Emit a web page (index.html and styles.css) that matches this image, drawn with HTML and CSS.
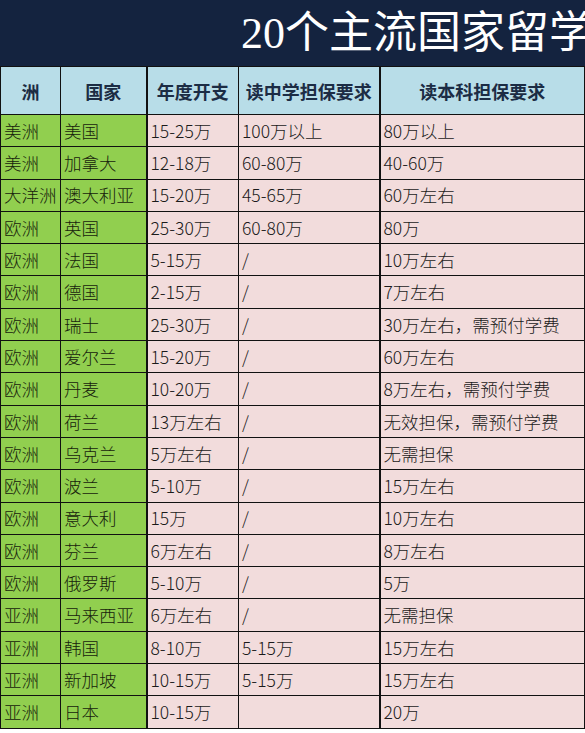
FILE: index.html
```html
<!DOCTYPE html>
<html lang="zh-CN">
<head>
<meta charset="utf-8">
<title>20个主流国家留学</title>
<link rel="stylesheet" href="styles.css">
</head>
<body>
<div class="sheet">
  <div class="title"><span class="title-text">20个主流国家留学</span></div>
  <table class="grid">
    <colgroup>
      <col class="c1"><col class="c2"><col class="c3"><col class="c4"><col class="c5">
    </colgroup>
    <thead>
      <tr class="head">
        <th>洲</th><th>国家</th><th class="thick">年度开支</th><th>读中学担保要求</th><th class="thick">读本科担保要求</th>
      </tr>
    </thead>
    <tbody>
      <tr><td class="g">美洲</td><td class="g">美国</td><td class="p thick">15-25万</td><td class="p">100万以上</td><td class="p thick">80万以上</td></tr>
      <tr><td class="g">美洲</td><td class="g">加拿大</td><td class="p thick">12-18万</td><td class="p">60-80万</td><td class="p thick">40-60万</td></tr>
      <tr><td class="g">大洋洲</td><td class="g">澳大利亚</td><td class="p thick">15-20万</td><td class="p">45-65万</td><td class="p thick">60万左右</td></tr>
      <tr><td class="g">欧洲</td><td class="g">英国</td><td class="p thick">25-30万</td><td class="p">60-80万</td><td class="p thick">80万</td></tr>
      <tr><td class="g">欧洲</td><td class="g">法国</td><td class="p thick">5-15万</td><td class="p">/</td><td class="p thick">10万左右</td></tr>
      <tr><td class="g">欧洲</td><td class="g">德国</td><td class="p thick">2-15万</td><td class="p">/</td><td class="p thick">7万左右</td></tr>
      <tr><td class="g">欧洲</td><td class="g">瑞士</td><td class="p thick">25-30万</td><td class="p">/</td><td class="p thick">30万左右，需预付学费</td></tr>
      <tr><td class="g">欧洲</td><td class="g">爱尔兰</td><td class="p thick">15-20万</td><td class="p">/</td><td class="p thick">60万左右</td></tr>
      <tr><td class="g">欧洲</td><td class="g">丹麦</td><td class="p thick">10-20万</td><td class="p">/</td><td class="p thick">8万左右，需预付学费</td></tr>
      <tr><td class="g">欧洲</td><td class="g">荷兰</td><td class="p thick">13万左右</td><td class="p">/</td><td class="p thick">无效担保，需预付学费</td></tr>
      <tr><td class="g">欧洲</td><td class="g">乌克兰</td><td class="p thick">5万左右</td><td class="p">/</td><td class="p thick">无需担保</td></tr>
      <tr><td class="g">欧洲</td><td class="g">波兰</td><td class="p thick">5-10万</td><td class="p">/</td><td class="p thick">15万左右</td></tr>
      <tr><td class="g">欧洲</td><td class="g">意大利</td><td class="p thick">15万</td><td class="p">/</td><td class="p thick">10万左右</td></tr>
      <tr><td class="g">欧洲</td><td class="g">芬兰</td><td class="p thick">6万左右</td><td class="p">/</td><td class="p thick">8万左右</td></tr>
      <tr><td class="g">欧洲</td><td class="g">俄罗斯</td><td class="p thick">5-10万</td><td class="p">/</td><td class="p thick">5万</td></tr>
      <tr><td class="g">亚洲</td><td class="g">马来西亚</td><td class="p thick">6万左右</td><td class="p">/</td><td class="p thick">无需担保</td></tr>
      <tr><td class="g">亚洲</td><td class="g">韩国</td><td class="p thick">8-10万</td><td class="p">5-15万</td><td class="p thick">15万左右</td></tr>
      <tr><td class="g">亚洲</td><td class="g">新加坡</td><td class="p thick">10-15万</td><td class="p">5-15万</td><td class="p thick">15万左右</td></tr>
      <tr><td class="g">亚洲</td><td class="g">日本</td><td class="p thick">10-15万</td><td class="p"></td><td class="p thick">20万</td></tr>
    </tbody>
  </table>
</div>
</body>
</html>
```

FILE: styles.css
```css
html, body {
  margin: 0;
  padding: 0;
  background: #ffffff;
}

.sheet {
  width: 585px;
  overflow: hidden;
  font-family: "Noto Sans CJK SC", "Noto Sans", sans-serif;
}

.title {
  height: 66px;
  background: #14233f;
  display: flex;
  align-items: center;
  padding-left: 241px;
  white-space: nowrap;
  overflow: hidden;
}

.title-text {
  color: #ffffff;
  font-family: "Liberation Serif", "Noto Sans CJK SC", serif;
  font-size: 44px;
  font-weight: 400;
  line-height: 1;
  padding-top: 2px;
}

.grid {
  border-collapse: collapse;
  table-layout: fixed;
  width: 584px;
}

.c1 { width: 60px; }
.c2 { width: 86px; }
.c3 { width: 92px; }
.c4 { width: 141px; }
.c5 { width: 205px; }

.grid th,
.grid td {
  border: 1px solid #111111;
  padding: 0 0 0 3px;
  white-space: nowrap;
  overflow: hidden;
}

.grid .thick {
  border-left: 2px solid #111111;
}

.head th {
  height: 47px;
  background: #b8dde8;
  color: #1c2c44;
  font-size: 18px;
  font-weight: 700;
  text-align: center;
  padding: 0;
}

.grid td {
  height: 31.3px;
  font-size: 17.5px;
  font-weight: 300;
  text-align: left;
  color: #1a1a1a;
  line-height: 1;
}

.grid td.g {
  background: #91cf4f;
  color: #17220c;
}

.grid td.p {
  background: #f2dcdc;
}
```
